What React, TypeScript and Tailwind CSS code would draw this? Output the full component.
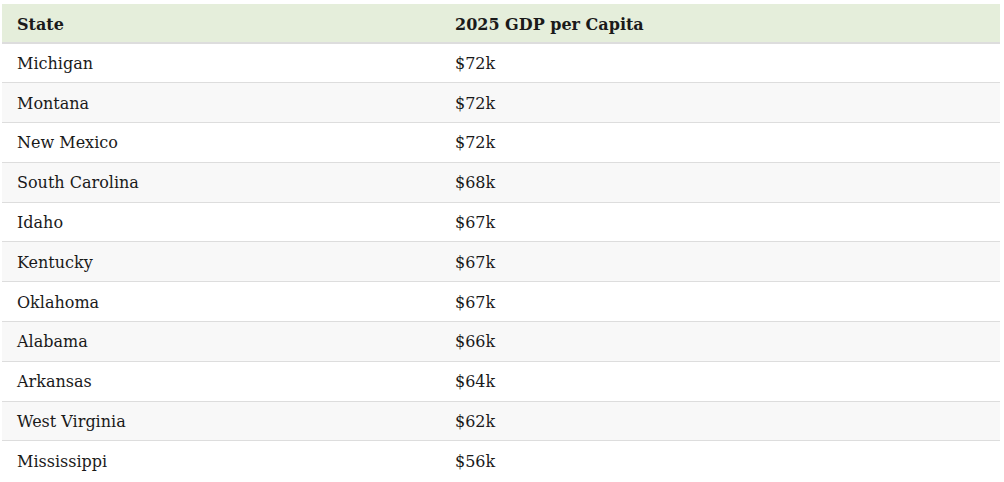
const rows: [string, string][] = [
  ["Michigan", "$72k"],
  ["Montana", "$72k"],
  ["New Mexico", "$72k"],
  ["South Carolina", "$68k"],
  ["Idaho", "$67k"],
  ["Kentucky", "$67k"],
  ["Oklahoma", "$67k"],
  ["Alabama", "$66k"],
  ["Arkansas", "$64k"],
  ["West Virginia", "$62k"],
  ["Mississippi", "$56k"],
];

export default function App() {
  return (
    <div className="bg-white pl-[2px] pr-[4px] pt-[4px] font-['DejaVu_Serif',serif] text-[16px] text-[#1a1a1a]">
      <table className="w-full border-collapse">
        <thead>
          <tr className="bg-[#e5eedb] border-b-2 border-[#dddddd]">
            <th className="w-[438px] h-[39px] pl-[15px] pt-[3px] text-left font-bold">State</th>
            <th className="h-[39px] pl-[15px] pt-[3px] text-left font-bold">2025 GDP per Capita</th>
          </tr>
        </thead>
        <tbody>
          {rows.map(([state, gdp], i) => (
            <tr
              key={state}
              className={`${i % 2 === 0 ? "bg-white" : "bg-[#f8f8f8]"} ${i < rows.length - 1 ? "border-b border-[#dddddd]" : ""}`}
            >
              <td className="h-[39.8px] pl-[15px] pt-[2px]">{state}</td>
              <td className="h-[39.8px] pl-[15px] pt-[2px]">{gdp}</td>
            </tr>
          ))}
        </tbody>
      </table>
    </div>
  );
}
